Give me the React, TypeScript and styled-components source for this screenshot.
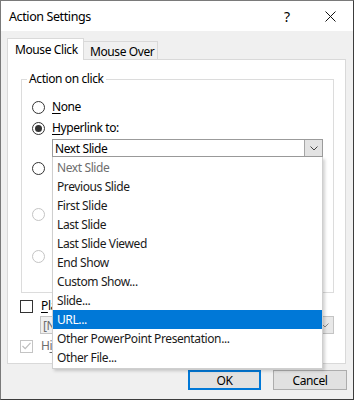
import React from 'react';
import styled, { createGlobalStyle } from 'styled-components';

const GlobalStyle = createGlobalStyle`
  html, body {
    margin: 0;
    padding: 0;
    background: #ffffff;
  }
  body {
    font-family: "Noto Sans", "Liberation Sans", sans-serif;
    font-size: 12px;
    letter-spacing: -0.4px;
    color: #000;
  }
`;

const Window = styled.div`
  width: 354px;
  height: 400px;
  box-sizing: border-box;
  border: 1px solid #7a7a7a;
  border-right-color: #3c3c3c;
  border-bottom-color: #3c3c3c;
  background: #f0f0f0;
  display: flex;
  flex-direction: column;
`;

const TitleBar = styled.div`
  height: 30px;
  background: #fff;
  display: flex;
  align-items: center;
  padding-left: 8px;
  flex-shrink: 0;
`;

const Title = styled.div`
  flex: 1;
  font-size: 12.5px;
`;

const Help = styled.div`
  width: 41px;
  font-size: 14px;
  text-align: left;
`;

const CloseBox = styled.div`
  width: 28px;
  display: flex;
  justify-content: flex-start;
`;

const Body = styled.div`
  flex: 1;
  display: flex;
  flex-direction: column;
  padding: 7px 7px 0 6px;
`;

const Tabs = styled.div`
  display: flex;
  align-items: flex-end;
  height: 21px;
  position: relative;
  z-index: 1;
`;

const Tab = styled.div<{ $active?: boolean }>`
  box-sizing: border-box;
  height: ${(p) => (p.$active ? '22px' : '18px')};
  margin-bottom: ${(p) => (p.$active ? '-1px' : '0')};
  padding: ${(p) => (p.$active ? '2px 7px 0 7px' : '1px 6px 0 6px')};
  width: ${(p) => (p.$active ? '77px' : '74px')};
  background: ${(p) => (p.$active ? '#fff' : '#f0f0f0')};
  border: 1px solid #d9d9d9;
  border-bottom: none;
  border-left: ${(p) => (p.$active ? '1px solid #d9d9d9' : 'none')};
  white-space: nowrap;
`;

const Panel = styled.div`
  position: relative;
  height: 305px;
  box-sizing: border-box;
  background: #fff;
  border: 1px solid #d9d9d9;
  display: flex;
  flex-direction: column;
`;

const Group = styled.fieldset`
  margin: 11px 11px 0 13px;
  padding: 0 0 0 10px;
  border: 1px solid #dcdcdc;
  height: 222px;
  box-sizing: border-box;
  display: flex;
  flex-direction: column;
  min-width: 0;
`;

const Legend = styled.legend`
  margin-left: -5px;
  padding: 0 2px;
  line-height: 16px;
`;

const Row = styled.div<{ $top?: number }>`
  display: flex;
  align-items: center;
  gap: 7px;
  height: 20px;
  margin-top: ${(p) => p.$top ?? 0}px;
`;

const Radio = styled.span<{ $checked?: boolean; $disabled?: boolean }>`
  width: 13px;
  height: 13px;
  box-sizing: border-box;
  border-radius: 50%;
  border: 1px solid ${(p) => (p.$disabled ? '#c4c4c4' : '#333')};
  background: #fff;
  display: flex;
  align-items: center;
  justify-content: center;
  flex-shrink: 0;
  &::after {
    content: '';
    display: ${(p) => (p.$checked ? 'block' : 'none')};
    width: 7px;
    height: 7px;
    border-radius: 50%;
    background: #333;
  }
`;

const Label = styled.span<{ $disabled?: boolean }>`
  color: ${(p) => (p.$disabled ? '#6d6d6d' : '#000')};
  white-space: nowrap;
  line-height: 16px;
`;

const U = styled.span`
  text-decoration: underline;
  text-underline-offset: 2px;
`;

const ComboWrap = styled.div<{ $top?: number }>`
  position: relative;
  margin-left: 20px;
  margin-top: ${(p) => p.$top ?? 0}px;
  width: 271px;
`;

const Combo = styled.div<{ $disabled?: boolean }>`
  height: 18px;
  box-sizing: border-box;
  border: 1px solid ${(p) => (p.$disabled ? '#c4c4c4' : '#9b9b9b')};
  background: ${(p) => (p.$disabled ? '#f0f0f0' : '#fff')};
  color: ${(p) => (p.$disabled ? '#6d6d6d' : '#000')};
  display: flex;
  align-items: center;
  padding-left: 2px;
`;

const ComboText = styled.span`
  flex: 1;
  white-space: nowrap;
  overflow: hidden;
`;

const ArrowBtn = styled.span<{ $disabled?: boolean }>`
  width: 18px;
  height: 16px;
  box-sizing: border-box;
  border-left: 1px solid #a6a6a6;
  background: ${(p) => (p.$disabled ? '#e8e8e8' : '#e3e3e3')};
  display: flex;
  align-items: center;
  justify-content: center;
`;

const List = styled.div`
  position: absolute;
  top: 18px;
  left: 0;
  width: 271px;
  box-sizing: border-box;
  background: #fff;
  border: 1px solid #cfcfcf;
  border-top: none;
  padding: 1px 0;
  box-shadow: 2px 2px 3px rgba(0, 0, 0, 0.18);
  z-index: 5;
`;

const Item = styled.div<{ $selected?: boolean; $dim?: boolean }>`
  height: 19px;
  line-height: 19px;
  padding-left: 4px;
  background: ${(p) => (p.$selected ? '#0078d7' : 'transparent')};
  color: ${(p) => (p.$selected ? '#fff' : p.$dim ? '#6d6d6d' : '#1a1a1a')};
  white-space: nowrap;
`;

const Below = styled.div`
  display: flex;
  flex-direction: column;
  padding-left: 12px;
`;

const CheckRow = styled.div<{ $top: number }>`
  display: flex;
  align-items: center;
  gap: 8px;
  height: 16px;
  margin-top: ${(p) => p.$top}px;
`;

const Check = styled.span<{ $disabled?: boolean }>`
  width: 13px;
  height: 13px;
  box-sizing: border-box;
  border: 1px solid ${(p) => (p.$disabled ? '#c4c4c4' : '#333')};
  background: #fff;
  display: flex;
  align-items: center;
  justify-content: center;
  flex-shrink: 0;
`;

const SoundCombo = styled.div`
  margin: 2px 0 0 20px;
  width: 294px;
`;

const Buttons = styled.div`
  display: flex;
  justify-content: flex-end;
  gap: 12px;
  margin: 6px -1px 0 0;
`;

const Button = styled.div<{ $default?: boolean }>`
  width: ${(p) => (p.$default ? '73px' : '74px')};
  height: 20px;
  box-sizing: border-box;
  background: #e1e1e1;
  border: ${(p) => (p.$default ? '2px solid #0078d7' : '1px solid #adadad')};
  display: flex;
  align-items: center;
  justify-content: center;
`;

const Chevron = ({ color = '#444' }: { color?: string }) => (
  <svg width="8" height="5" viewBox="0 0 8 5">
    <path d="M0.5 0.5 L4 4 L7.5 0.5" fill="none" stroke={color} strokeWidth="1" />
  </svg>
);

const links = [
  'Next Slide',
  'Previous Slide',
  'First Slide',
  'Last Slide',
  'Last Slide Viewed',
  'End Show',
  'Custom Show...',
  'Slide...',
  'URL...',
  'Other PowerPoint Presentation...',
  'Other File...',
];

const App: React.FC = () => {
  return (
    <>
      <GlobalStyle />
      <Window>
        <TitleBar>
          <Title>Action Settings</Title>
          <Help>?</Help>
          <CloseBox>
            <svg width="11" height="11" viewBox="0 0 11 11">
              <path d="M0.5 0.5 L10.5 10.5 M10.5 0.5 L0.5 10.5" stroke="#111" strokeWidth="1" />
            </svg>
          </CloseBox>
        </TitleBar>
        <Body>
          <Tabs>
            <Tab $active>Mouse Click</Tab>
            <Tab>Mouse Over</Tab>
          </Tabs>
          <Panel>
            <Group>
              <Legend>Action on click</Legend>
              <Row $top={10}>
                <Radio />
                <Label>
                  <U>N</U>one
                </Label>
              </Row>
              <Row $top={1}>
                <Radio $checked />
                <Label>
                  <U>H</U>yperlink to:
                </Label>
              </Row>
              <ComboWrap $top={1}>
                <Combo>
                  <ComboText>Next Slide</ComboText>
                  <ArrowBtn>
                    <Chevron />
                  </ArrowBtn>
                </Combo>
                <List>
                  {links.map((l, i) => (
                    <Item key={l} $selected={l === 'URL...'} $dim={i === 0}>
                      {l}
                    </Item>
                  ))}
                </List>
              </ComboWrap>
              <Row $top={1}>
                <Radio />
                <Label>
                  <U>R</U>un program:
                </Label>
              </Row>
              <ComboWrap $top={2}>
                <Combo />
              </ComboWrap>
              <Row $top={6}>
                <Radio $disabled />
                <Label $disabled>
                  Run <U>m</U>acro:
                </Label>
              </Row>
              <ComboWrap $top={2}>
                <Combo $disabled />
              </ComboWrap>
              <Row $top={2}>
                <Radio $disabled />
                <Label $disabled>
                  <U>O</U>bject action:
                </Label>
              </Row>
            </Group>
            <Below>
              <CheckRow $top={5}>
                <Check />
                <Label>
                  <U>P</U>lay sound:
                </Label>
              </CheckRow>
              <SoundCombo>
                <Combo $disabled>
                  <ComboText>[No Sound]</ComboText>
                  <ArrowBtn $disabled>
                    <Chevron color="#888" />
                  </ArrowBtn>
                </Combo>
              </SoundCombo>
              <CheckRow $top={4}>
                <Check $disabled>
                  <svg width="9" height="8" viewBox="0 0 9 8">
                    <path d="M0.5 4 L3.2 6.7 L8.5 0.8" fill="none" stroke="#bdbdbd" strokeWidth="1.2" />
                  </svg>
                </Check>
                <Label $disabled>
                  H<U>i</U>ghlight click
                </Label>
              </CheckRow>
            </Below>
          </Panel>
          <Buttons>
            <Button $default>OK</Button>
            <Button>Cancel</Button>
          </Buttons>
        </Body>
      </Window>
    </>
  );
};

export default App;
